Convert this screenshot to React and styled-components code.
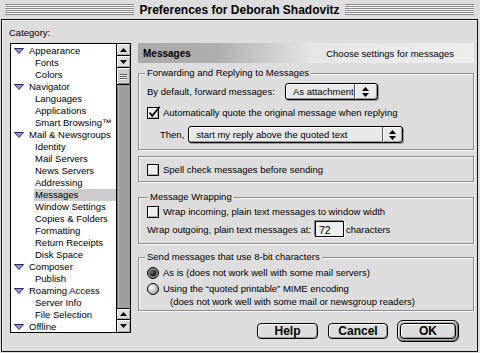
import React from "react";
import styled, { createGlobalStyle } from "styled-components";

const GlobalStyle = createGlobalStyle`
  html, body {
    margin: 0;
    padding: 0;
    background: #dddddd;
  }
  body {
    width: 480px;
    height: 353px;
    overflow: hidden;
    font-family: "Liberation Sans", Arial, sans-serif;
    font-size: 9.5px;
    color: #000;
  }
`;

const Window = styled.div`
  width: 480px;
  height: 353px;
  background: #dddddd;
  display: flex;
  flex-direction: column;
`;

const TitleBar = styled.div`
  height: 19px;
  display: flex;
  align-items: center;
  gap: 5px;
  padding: 0 6px 0 5px;
  box-sizing: border-box;
`;

const Stripes = styled.div`
  flex: 1;
  height: 11px;
  background: repeating-linear-gradient(to bottom, #8a8a8a 0 1px, #f6f6f6 1px 2px);
`;

const Title = styled.div`
  font-weight: bold;
  font-size: 12px;
  line-height: 14px;
  white-space: nowrap;
`;

const Content = styled.div`
  margin-left: 1px;
  width: 477px;
  height: 333px;
  box-sizing: border-box;
  border: 1px solid #111;
  box-shadow: inset 1px 1px 0 #f4f4f4;
  display: grid;
  grid-template-columns: 121px 336px;
  grid-template-rows: 23px 1fr;
  column-gap: 7px;
  padding-left: 8px;
`;

const CategoryLabel = styled.div`
  grid-column: 1 / 3;
  margin: 7px 0 0 -1px;
  line-height: 12px;
`;

/* ---------- category list ---------- */

const ListBox = styled.div`
  height: 290px;
  box-sizing: border-box;
  border: 1px solid #000;
  background: #fff;
  display: flex;
  overflow: hidden;
`;

const Rows = styled.div`
  flex: 1;
  padding-top: 1px;
  overflow: hidden;
`;

const Row = styled.div`
  height: 12px;
  line-height: 12px;
  display: flex;
  align-items: center;
  white-space: nowrap;
  padding-left: ${(p) => (p.$top ? "3px" : "23px")};
`;

const RowText = styled.span`
  flex: 1;
  padding-left: 1px;
  height: 12px;
  background: ${(p) => (p.$selected ? "#cccccc" : "transparent")};
`;

const Twisty = styled.svg`
  width: 10px;
  height: 6px;
  margin-right: 4px;
  flex-shrink: 0;
`;

const ScrollBar = styled.div`
  width: 14px;
  border-left: 1px solid #000;
  box-sizing: border-box;
  display: flex;
  flex-direction: column;
  background: #dddddd;
`;

const ArrowBox = styled.div`
  height: 12px;
  box-sizing: border-box;
  border-bottom: ${(p) => (p.$last ? "0" : "1px solid #000")};
  border-top: ${(p) => (p.$first ? "1px solid #000" : "0")};
  box-shadow: inset 1px 1px 0 #fff, inset -1px -1px 0 #aaa;
  display: flex;
  align-items: center;
  justify-content: center;
`;

const Thumb = styled.div`
  height: 17px;
  box-sizing: border-box;
  border-bottom: 1px solid #000;
  background: #cccccc;
  box-shadow: inset 1px 1px 0 #fff, inset -1px -1px 0 #888;
  display: flex;
  flex-direction: column;
  align-items: center;
  justify-content: center;
  gap: 1px;
`;

const Grip = styled.div`
  width: 7px;
  height: 1px;
  background: #555;
  box-shadow: 0 1px 0 #fff;
`;

const Track = styled.div`
  flex: 1;
  background: #9d9d9d;
  box-shadow: inset 1px 0 0 #7a7a7a, inset 2px 0 0 #bdbdbd;
`;

/* ---------- right panel ---------- */

const Panel = styled.div`
  display: flex;
  flex-direction: column;
`;

const Header = styled.div`
  height: 20px;
  display: flex;
  align-items: center;
  justify-content: space-between;
  padding: 0 20px 0 5px;
  background: linear-gradient(to right, #aaaaaa 0, #afafaf 80px, #e6e6e6 175px, #ededed 100%);
`;

const HeaderTitle = styled.span`
  font-weight: bold;
  font-size: 10px;
`;

const Group = styled.div`
  position: relative;
  margin-top: ${(p) => p.$mt}px;
  height: ${(p) => p.$h}px;
  box-sizing: border-box;
  border: 1px solid #8a8a8a;
  box-shadow: inset 1px 1px 0 #fafafa, 1px 1px 0 #fafafa;
  padding: ${(p) => p.$pt}px 0 0 8px;
  display: flex;
  flex-direction: column;
`;

const Legend = styled.span`
  position: absolute;
  top: -7px;
  left: ${(p) => p.$left || 6}px;
  padding: 0 2px;
  background: #dddddd;
  line-height: 12px;
  white-space: nowrap;
`;

const Line = styled.div`
  display: flex;
  align-items: center;
  height: ${(p) => p.$h || 14}px;
  margin-top: ${(p) => p.$mt || 0}px;
  padding-left: ${(p) => p.$indent || 0}px;
  white-space: nowrap;
`;

const FieldLabel = styled.span`
  width: ${(p) => (p.$w ? `${p.$w}px` : "auto")};
  margin-right: ${(p) => p.$mr || 0}px;
  flex-shrink: 0;
`;

const Popup = styled.div`
  width: ${(p) => p.$w}px;
  height: 17px;
  box-sizing: border-box;
  border: 1px solid #000;
  border-radius: 3px;
  background: #e8e8e8;
  box-shadow: inset 1px 1px 0 #fff, inset -1px -1px 0 #999, 1px 1px 0 #999;
  display: flex;
  align-items: center;
`;

const PopupText = styled.span`
  flex: 1;
  padding-left: 7px;
`;

const PopupArrows = styled.div`
  width: ${(p) => p.$w}px;
  height: 100%;
  border-left: 1px solid #555;
  box-shadow: inset 1px 0 0 #fff;
  display: flex;
  align-items: center;
  justify-content: center;
`;

const BoxIcon = styled.svg`
  flex-shrink: 0;
  margin-right: ${(p) => p.$mr || 4}px;
`;

const TextField = styled.div`
  width: 29px;
  height: 16px;
  box-sizing: border-box;
  border: 1px solid #000;
  background: #eeeeee;
  box-shadow: -1px -1px 0 #888, 1px 1px 0 #fff;
  padding: 2px 0 0 3px;
  font-size: 10.5px;
  line-height: 12px;
  margin-right: 2px;
`;

const ButtonRow = styled.div`
  margin-top: 9px;
  height: 22px;
  display: flex;
  align-items: center;
  justify-content: flex-end;
  padding-right: 15px;
`;

const Button = styled.div`
  width: ${(p) => p.$w}px;
  height: 16px;
  box-sizing: border-box;
  border: 1px solid #000;
  border-radius: 4px;
  background: #dddddd;
  box-shadow: inset 1px 1px 0 #fff, inset -1px -1px 0 #999;
  display: flex;
  align-items: center;
  justify-content: center;
  font-weight: bold;
  font-size: 12px;
  margin-left: ${(p) => p.$ml || 0}px;
`;

const DefaultRing = styled.div`
  width: 62px;
  height: 22px;
  box-sizing: border-box;
  border: 1px solid #000;
  border-radius: 6px;
  background: #b4b4b4;
  box-shadow: inset 1px 1px 0 #eee, inset -1px -1px 0 #777;
  padding: 2px;
  margin-left: 9px;
  display: flex;
`;

/* ---------- small drawings ---------- */

const TwistyIcon = () => (
  <Twisty viewBox="0 0 10 6">
    <polygon points="0.5,0.5 9.5,0.5 5,5.5" fill="#9191ee" stroke="#2a2a55" strokeWidth="1" />
  </Twisty>
);

const ScrollArrow = ({ up }) => (
  <svg width="7" height="4" viewBox="0 0 7 4">
    <polygon points={up ? "0,4 3.5,0 7,4" : "0,0 7,0 3.5,4"} fill="#000" />
  </svg>
);

const UpDown = () => (
  <svg width="7" height="10" viewBox="0 0 7 10">
    <polygon points="0,4 3.5,0 7,4" fill="#000" />
    <polygon points="0,6 7,6 3.5,10" fill="#000" />
  </svg>
);

const CheckBox = ({ checked }) => (
  <BoxIcon width="14" height="13" viewBox="0 0 14 13" $mr={2}>
    <rect x="0.5" y="1.5" width="11" height="11" fill="#eeeeee" stroke="#000" />
    <path d="M1.5 11.5 V2.5 H10.5" fill="none" stroke="#fff" />
    <path d="M2 11.5 H10.5 V3" fill="none" stroke="#aaa" />
    {checked && (
      <path d="M2.6 6.6 L5.2 9.8 L12.6 0.8" fill="none" stroke="#000" strokeWidth="1.7" />
    )}
  </BoxIcon>
);

const Radio = ({ on }) => (
  <BoxIcon width="12" height="12" viewBox="0 0 12 12" $mr={4}>
    <defs>
      <radialGradient id="rOff" cx="0.35" cy="0.35" r="0.75">
        <stop offset="0" stopColor="#ffffff" />
        <stop offset="1" stopColor="#999999" />
      </radialGradient>
      <radialGradient id="rOn" cx="0.35" cy="0.35" r="0.7">
        <stop offset="0" stopColor="#777" />
        <stop offset="1" stopColor="#000" />
      </radialGradient>
    </defs>
    <circle cx="6" cy="6" r="5.5" fill={on ? "#8a8a8a" : "url(#rOff)"} stroke="#000" />
    {on && <circle cx="6" cy="6" r="3.3" fill="url(#rOn)" />}
  </BoxIcon>
);

const categories = [
  { label: "Appearance", top: true },
  { label: "Fonts" },
  { label: "Colors" },
  { label: "Navigator", top: true },
  { label: "Languages" },
  { label: "Applications" },
  { label: "Smart Browsing™" },
  { label: "Mail & Newsgroups", top: true },
  { label: "Identity" },
  { label: "Mail Servers" },
  { label: "News Servers" },
  { label: "Addressing" },
  { label: "Messages", selected: true },
  { label: "Window Settings" },
  { label: "Copies & Folders" },
  { label: "Formatting" },
  { label: "Return Receipts" },
  { label: "Disk Space" },
  { label: "Composer", top: true },
  { label: "Publish" },
  { label: "Roaming Access", top: true },
  { label: "Server Info" },
  { label: "File Selection" },
  { label: "Offline", top: true },
];

export default function App() {
  return (
    <>
      <GlobalStyle />
      <Window>
        <TitleBar>
          <Stripes />
          <Title>Preferences for Deborah Shadovitz</Title>
          <Stripes />
        </TitleBar>
        <Content>
          <CategoryLabel>Category:</CategoryLabel>

          <ListBox>
            <Rows>
              {categories.map((c) => (
                <Row key={c.label} $top={c.top}>
                  {c.top && <TwistyIcon />}
                  <RowText $selected={c.selected}>{c.label}</RowText>
                </Row>
              ))}
            </Rows>
            <ScrollBar>
              <ArrowBox>
                <ScrollArrow up />
              </ArrowBox>
              <ArrowBox>
                <ScrollArrow />
              </ArrowBox>
              <Thumb>
                <Grip />
                <Grip />
                <Grip />
              </Thumb>
              <Track />
              <ArrowBox $first>
                <ScrollArrow up />
              </ArrowBox>
              <ArrowBox $last>
                <ScrollArrow />
              </ArrowBox>
            </ScrollBar>
          </ListBox>

          <Panel>
            <Header>
              <HeaderTitle>Messages</HeaderTitle>
              <span>Choose settings for messages</span>
            </Header>

            <Group $mt={10} $h={77} $pt={9}>
              <Legend>Forwarding and Replying to Messages</Legend>
              <Line $h={17}>
                <FieldLabel $w={138}>By default, forward messages:</FieldLabel>
                <Popup $w={93}>
                  <PopupText>As attachment</PopupText>
                  <PopupArrows $w={23}>
                    <UpDown />
                  </PopupArrows>
                </Popup>
              </Line>
              <Line $mt={5}>
                <CheckBox checked />
                Automatically quote the original message when replying
              </Line>
              <Line $h={17} $mt={7} $indent={13}>
                <FieldLabel $mr={4}>Then,</FieldLabel>
                <Popup $w={215}>
                  <PopupText>start my reply above the quoted text</PopupText>
                  <PopupArrows $w={19}>
                    <UpDown />
                  </PopupArrows>
                </Popup>
              </Line>
            </Group>

            <Group $mt={6} $h={26} $pt={5}>
              <Line>
                <CheckBox />
                Spell check messages before sending
              </Line>
            </Group>

            <Group $mt={15} $h={47} $pt={6}>
              <Legend $left={9}>Message Wrapping</Legend>
              <Line>
                <CheckBox />
                Wrap incoming, plain text messages to window width
              </Line>
              <Line $h={16} $mt={3}>
                <FieldLabel $w={168}>Wrap outgoing, plain text messages at:</FieldLabel>
                <TextField>72</TextField>
                characters
              </Line>
            </Group>

            <Group $mt={13} $h={54} $pt={8}>
              <Legend>Send messages that use 8-bit characters</Legend>
              <Line $h={13}>
                <Radio on />
                As is (does not work well with some mail servers)
              </Line>
              <Line $h={13} $mt={3}>
                <Radio />
                Using the “quoted printable” MIME encoding
              </Line>
              <Line $h={12} $indent={23}>
                (does not work well with some mail or newsgroup readers)
              </Line>
            </Group>

            <ButtonRow>
              <Button $w={61}>Help</Button>
              <Button $w={60} $ml={10}>
                Cancel
              </Button>
              <DefaultRing>
                <Button $w={56}>OK</Button>
              </DefaultRing>
            </ButtonRow>
          </Panel>
        </Content>
      </Window>
    </>
  );
}
